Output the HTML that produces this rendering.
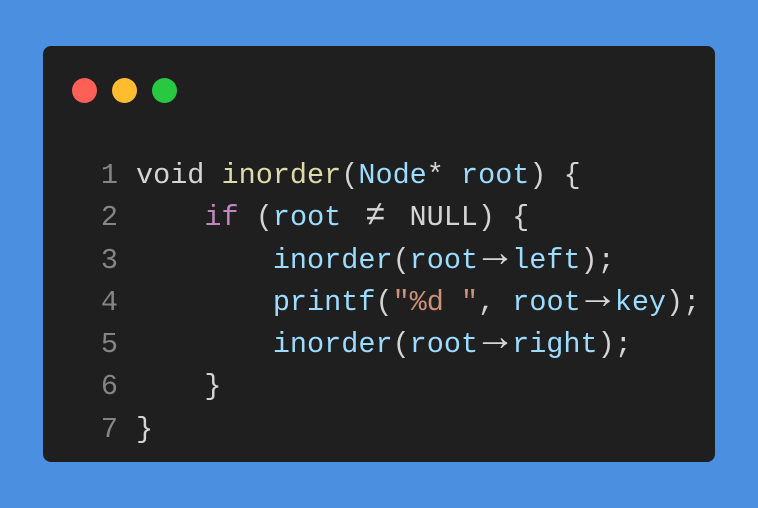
<!DOCTYPE html>
<html><head><meta charset="utf-8"><style>
html,body{margin:0;padding:0;}
body{width:758px;height:508px;background:#4a8fe0;position:relative;overflow:hidden;}
.card{position:absolute;left:43px;top:46px;width:672px;height:416px;background:#1f1f1f;border-radius:8px;}
.dot{position:absolute;top:32px;width:25px;height:25px;border-radius:50%;}
.code{position:absolute;left:0;top:109px;font-family:"Liberation Mono",monospace;font-size:28.5px;line-height:42.3px;color:#d4d4d4;white-space:pre;}
.ln{display:inline-block;width:75px;text-align:right;color:#858585;margin-right:18px;}
.k{color:#c586c0}.f{color:#dcdcaa}.v{color:#9cdcfe}.s{color:#ce9178}
.lg{display:inline-block;width:34px;text-align:center;line-height:0;}
.ar{font-size:1.45em;position:relative;top:-2px;}
.ne{font-size:1.2em;}
</style></head><body>
<div class="card">
<div class="dot" style="left:29px;background:#fe5f57"></div>
<div class="dot" style="left:69px;background:#febc2e"></div>
<div class="dot" style="left:109px;background:#28c840"></div>
<div class="code"><div><span class="ln">1</span>void <span class="f">inorder</span>(<span class="v">Node</span>* <span class="v">root</span>) {</div><div><span class="ln">2</span>    <span class="k">if</span> (<span class="v">root</span> <span class="lg"><span class="ne">≠</span></span> NULL) {</div><div><span class="ln">3</span>        <span class="v">inorder</span>(<span class="v">root</span><span class="lg"><span class="ar">→</span></span><span class="v">left</span>);</div><div><span class="ln">4</span>        <span class="v">printf</span>(<span class="s">"%d "</span>, <span class="v">root</span><span class="lg"><span class="ar">→</span></span><span class="v">key</span>);</div><div><span class="ln">5</span>        <span class="v">inorder</span>(<span class="v">root</span><span class="lg"><span class="ar">→</span></span><span class="v">right</span>);</div><div><span class="ln">6</span>    }</div><div><span class="ln">7</span>}</div></div>
</div>
</body></html>
